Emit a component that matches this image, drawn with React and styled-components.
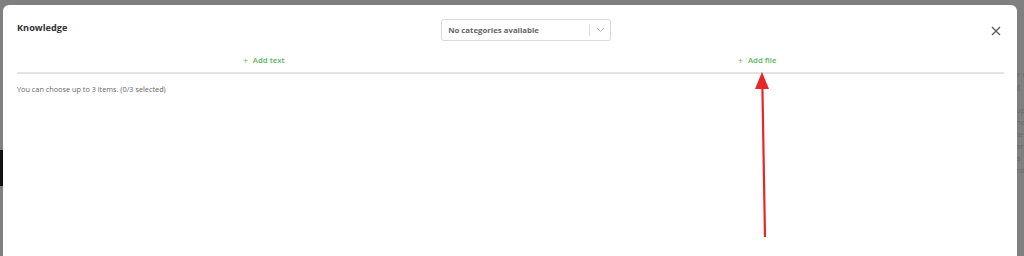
import React from 'react';
import styled, { createGlobalStyle } from 'styled-components';

const GlobalStyle = createGlobalStyle`
  html, body {
    margin: 0;
    padding: 0;
    background: #808080;
    overflow: hidden;
  }
  body {
    font-family: "Open Sans", "Liberation Sans", sans-serif;
  }
`;

// Page behind the modal
const Backdrop = styled.div`
  height: 256px;
  display: flex;
  padding: 5px 7px 0 3px;
  box-sizing: border-box;
  position: relative;
`;

const SideBlock = styled.div`
  position: absolute;
  left: 0;
  top: 150px;
  width: 3px;
  height: 36px;
  background: #111;
`;

const SideText = styled.div`
  position: absolute;
  right: -4px;
  top: 68px;
  width: 12px;
  font-size: 8px;
  line-height: 12px;
  color: #6a6a6a;
  overflow: hidden;
  white-space: nowrap;
`;

const Modal = styled.div`
  flex: 1;
  background: #fff;
  border-radius: 6px 6px 0 0;
  display: flex;
  flex-direction: column;
  position: relative;
`;

const Header = styled.div`
  display: flex;
  align-items: center;
  justify-content: space-between;
  padding: 14px 15px 0 14px;
`;

const Title = styled.h2`
  margin: -5px 0 0;
  font-size: 9.2px;
  font-weight: 700;
  color: #333;
`;

const Select = styled.div`
  width: 168px;
  height: 20px;
  border: 1px solid #d9d9d9;
  border-radius: 3px;
  display: flex;
  align-items: center;
  margin-right: 5px;
`;

const SelectValue = styled.span`
  flex: 1;
  padding-left: 6px;
  font-size: 7.8px;
  font-weight: 700;
  color: #666;
`;

const SelectDivider = styled.span`
  width: 1px;
  height: 12px;
  background: #ddd;
`;

const SelectArrow = styled.span`
  width: 20px;
  display: flex;
  align-items: center;
  justify-content: center;
`;

const CloseButton = styled.button`
  border: none;
  background: none;
  padding: 0;
  width: 12px;
  height: 12px;
  display: flex;
  align-items: center;
  justify-content: center;
  margin-top: 1px;
`;

const Body = styled.div`
  padding: 0 13px 0 14px;
`;

const Tabs = styled.div`
  display: grid;
  grid-template-columns: 1fr 1fr;
  border-bottom: 2px solid #e4e4e4;
  margin-top: 7px;
`;

const Tab = styled.div`
  height: 24px;
  display: flex;
  align-items: center;
  justify-content: center;
  gap: 5px;
  font-size: 7.8px;
  font-weight: 600;
  color: #5cb85c;
`;

const Plus = styled.span`
  font-size: 8.5px;
  font-weight: 400;
`;

const Hint = styled.p`
  margin: 10px 0 0;
  font-size: 7.3px;
  color: #666;
`;

const Arrow = styled.svg`
  position: absolute;
  left: 747px;
  top: 64px;
`;

const Chevron = () => (
  <svg width="9" height="6" viewBox="0 0 9 6">
    <path d="M1 1l3.5 3.5L8 1" fill="none" stroke="#bbb" strokeWidth="1" />
  </svg>
);

const CloseIcon = () => (
  <svg width="10" height="10" viewBox="0 0 10 10">
    <path d="M1 1l8 8M9 1l-8 8" stroke="#555" strokeWidth="1.2" />
  </svg>
);

export default function App() {
  return (
    <>
      <GlobalStyle />
      <Backdrop>
        <SideBlock />
        <SideText>
          e n<br />g<br /><br />up<br />nd<br />te<br />ar<br />o<br />rd
        </SideText>
        <Modal>
          <Header>
            <Title>Knowledge</Title>
            <Select>
              <SelectValue>No categories available</SelectValue>
              <SelectDivider />
              <SelectArrow>
                <Chevron />
              </SelectArrow>
            </Select>
            <CloseButton aria-label="Close">
              <CloseIcon />
            </CloseButton>
          </Header>
          <Body>
            <Tabs>
              <Tab>
                <Plus>+</Plus>Add text
              </Tab>
              <Tab>
                <Plus>+</Plus>Add file
              </Tab>
            </Tabs>
            <Hint>You can choose up to 3 items. (0/3 selected)</Hint>
          </Body>
          <Arrow width="24" height="180" viewBox="0 0 24 180">
            <path d="M15 168 L12.4 18" stroke="#e8262a" strokeWidth="2.2" fill="none" />
            <path d="M12 3 L5 20 L19 20 Z" fill="#e8262a" />
          </Arrow>
        </Modal>
      </Backdrop>
    </>
  );
}
